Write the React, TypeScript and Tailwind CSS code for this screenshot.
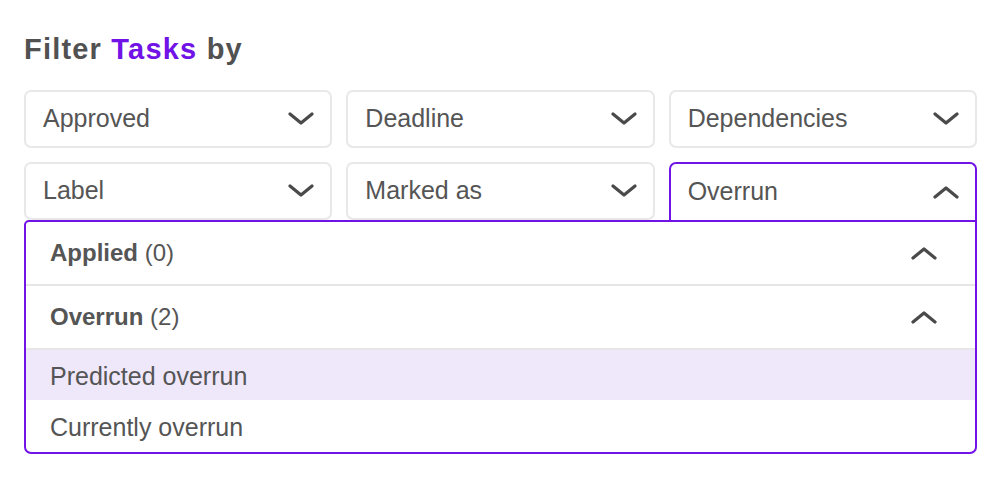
import React from 'react'

const FONT = { fontFamily: '"Liberation Sans", Arial, sans-serif' }

function Chevron({ up = false }: { up?: boolean }) {
  return (
    <svg width="26" height="14" viewBox="0 0 26 14" className="text-[#4a4a4a] shrink-0">
      <polyline
        points={up ? '2,12 13,3 24,12' : '2,2 13,11 24,2'}
        fill="none"
        stroke="currentColor"
        strokeWidth="3.2"
        strokeLinecap="round"
        strokeLinejoin="round"
      />
    </svg>
  )
}

function Select({ label }: { label: string }) {
  return (
    <div className="h-[58px] flex items-center justify-between pl-[17px] pr-[16px] border-2 border-[#e8e8e8] rounded-[7px] bg-white">
      <span className="text-[25px] text-[#555]">{label}</span>
      <Chevron />
    </div>
  )
}

export default function App() {
  return (
    <div className="min-h-screen bg-white" style={FONT}>
      <div className="w-[953px] ml-[24px] pt-[35px]">
        <h1 className="text-[29px] font-bold text-[#515151] tracking-[1.2px] leading-none mb-[26px]">
          Filter <span className="text-[#7112e6]">Tasks</span> by
        </h1>

        <div className="grid grid-cols-3 gap-[14px]">
          <Select label="Approved" />
          <Select label="Deadline" />
          <Select label="Dependencies" />
          <Select label="Label" />
          <Select label="Marked as" />
          <div className="h-[58px] flex items-center justify-between pl-[17px] pr-[16px] border-2 border-b-0 border-[#7112e6] rounded-t-[7px] bg-white">
            <span className="text-[25px] text-[#555]">Overrun</span>
            <Chevron up />
          </div>
        </div>

        <div className="border-2 border-[#7112e6] rounded-b-[7px] rounded-tl-[5px] bg-white overflow-hidden">
          <div className="h-[64px] flex items-center justify-between pl-[24px] pr-[38px] border-b-2 border-[#e6e6e6]">
            <span className="text-[24px] text-[#555]">
              <span className="font-bold">Applied</span> (0)
            </span>
            <Chevron up />
          </div>
          <div className="h-[64px] flex items-center justify-between pl-[24px] pr-[38px] border-b-2 border-[#e6e6e6]">
            <span className="text-[24px] text-[#555]">
              <span className="font-bold">Overrun</span> (2)
            </span>
            <Chevron up />
          </div>
          <div className="h-[50px] flex items-center pl-[24px] pt-[4px] bg-[#efe7fa]">
            <span className="text-[25px] text-[#555]">Predicted overrun</span>
          </div>
          <div className="h-[52px] flex items-center pl-[24px] pt-[4px]">
            <span className="text-[25px] text-[#555]">Currently overrun</span>
          </div>
        </div>
      </div>
    </div>
  )
}
